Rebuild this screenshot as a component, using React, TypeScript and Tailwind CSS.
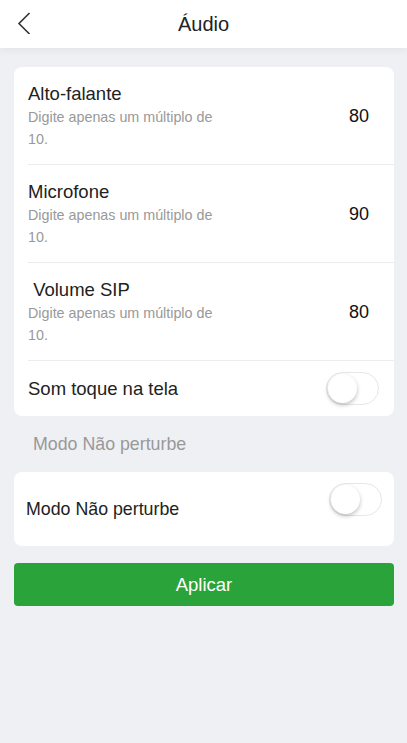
import React from "react";

function Toggle() {
  return (
    <div className="w-[53px] h-[33px] rounded-full border border-[#e6e6e6] bg-white flex items-center px-[1px] shrink-0">
      <div className="w-[29px] h-[29px] rounded-full bg-white shadow-[0_2px_4px_rgba(0,0,0,0.25)]" />
    </div>
  );
}

function ValueRow({ title, value }: { title: string; value: string }) {
  return (
    <div className="ml-[14px] border-b border-[#ececec] flex items-center justify-between pt-[15px] pb-[14px] pr-[25px]">
      <div>
        <div className="text-[18.5px] leading-[24px] text-[#222] whitespace-pre">{title}</div>
        <div className="w-[195px] text-[14.3px] leading-[22px] text-[#999]">
          Digite apenas um múltiplo de 10.
        </div>
      </div>
      <div className="text-[18px] text-[#111]">{value}</div>
    </div>
  );
}

export default function App() {
  return (
    <div
      className="min-h-[743px] bg-[#eff0f4] flex flex-col"
      style={{ fontFamily: '"Liberation Sans", Arial, sans-serif' }}
    >
      {/* Header */}
      <div className="relative h-[48px] bg-white flex items-center justify-center shadow-[0_2px_8px_rgba(0,0,0,0.06)]">
        <svg
          className="absolute left-[17px] top-[12px]"
          width="14"
          height="22"
          viewBox="0 0 14 22"
          fill="none"
        >
          <path d="M12.5 1 L2 11.5 L12.5 22" stroke="#333" strokeWidth="1.6" />
        </svg>
        <span className="text-[20px] text-[#222]">Áudio</span>
      </div>

      <div className="pl-[14px] pr-[13px] pt-[19px] flex flex-col">
        {/* Card 1 */}
        <div className="bg-white rounded-[8px] overflow-hidden">
          <ValueRow title="Alto-falante" value="80" />
          <ValueRow title="Microfone" value="90" />
          <ValueRow title=" Volume SIP" value="80" />
          <div className="ml-[14px] h-[55px] flex items-center justify-between pr-[15px]">
            <span className="text-[18.5px] text-[#222]">Som toque na tela</span>
            <Toggle />
          </div>
        </div>

        {/* Section label */}
        <div className="h-[56px] flex items-center pl-[19px] text-[17.8px] text-[#999]">
          Modo Não perturbe
        </div>

        {/* Card 2 */}
        <div className="bg-white rounded-[8px] h-[74px] flex justify-between pl-[12px] pr-[12px]">
          <span className="self-center text-[17.8px] text-[#222]">Modo Não perturbe</span>
          <div className="mt-[11px]">
            <Toggle />
          </div>
        </div>

        {/* Button */}
        <button className="mt-[17px] h-[43px] rounded-[4px] bg-[#2ba33b] text-white text-[18.5px]">
          Aplicar
        </button>
      </div>
    </div>
  );
}
